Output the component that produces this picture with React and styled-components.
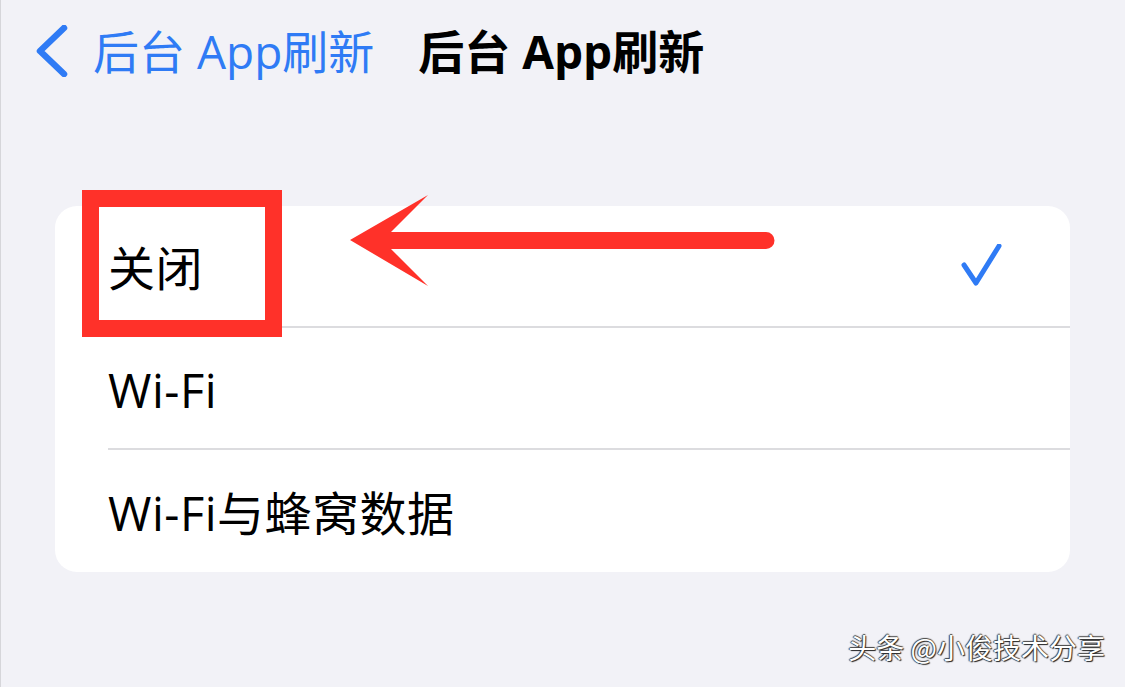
import React from "react";
import styled, { createGlobalStyle } from "styled-components";

const Global = createGlobalStyle`
  html, body { margin: 0; padding: 0; background: #f2f2f7; }
  body { font-family: "Open Sans", "Noto Sans CJK SC", sans-serif; }
`;

const Page = styled.div`
  width: 1125px;
  height: 687px;
  box-sizing: border-box;
  background: #f2f2f7;
  border-left: 1px solid #d6d6da;
  padding: 26px 0 0 0;
  display: flex;
  flex-direction: column;
  overflow: hidden;
`;

const NavBar = styled.div`
  display: flex;
  align-items: center;
  height: 50px;
  padding-left: 35px;
`;

const BackButton = styled.div`
  display: flex;
  align-items: center;
  gap: 23px;
  color: #2f7bf5;
  font-family: "Open Sans", "Noto Sans CJK SC", sans-serif;
  font-size: 46px;
  line-height: 1;
`;

const Title = styled.div`
  margin-left: 44px;
  color: #000;
  font-family: "Open Sans", "Noto Sans CJK SC", sans-serif;
  font-weight: 700;
  font-size: 46px;
  line-height: 1;
`;

const Card = styled.div`
  position: relative;
  margin: 130px 0 0 54px;
  width: 1015px;
  background: #fff;
  border-radius: 22px;
  display: flex;
  flex-direction: column;
`;

const Row = styled.div`
  height: 122px;
  padding-left: 55px;
  display: flex;
`;

const RowInner = styled.div`
  flex: 1;
  display: flex;
  align-items: center;
  justify-content: space-between;
  padding-right: 66px;
  border-bottom: ${(p) => (p.$last ? "none" : "2px solid #dcdcdf")};
  margin-left: -2px;
`;

const Label = styled.span`
  font-family: "Open Sans", "Noto Sans CJK SC", sans-serif;
  font-size: 47px;
  letter-spacing: 0.5px;
  color: #000;
  line-height: 1;
  padding-top: 4px;
`;

const Highlight = styled.div`
  position: absolute;
  left: 27px;
  top: -16px;
  width: 200px;
  height: 147px;
  box-sizing: border-box;
  border: 17px solid #ff3129;
  pointer-events: none;
`;

const Arrow = styled.svg`
  position: absolute;
  left: 290px;
  top: -16px;
  pointer-events: none;
`;

const Footer = styled.div`
  margin-top: auto;
  padding: 0 20px 20px 0;
  text-align: right;
  font-family: "Noto Sans CJK SC", sans-serif;
  font-size: 28px;
  color: #fff;
  text-shadow: 1px 1px 1px #222, -1px 0 1px #444, 0 -1px 1px #444;
`;

const Chevron = () => (
  <svg width="34" height="52" viewBox="0 0 34 52">
    <path d="M28 3 L4 26 L28 49" fill="none" stroke="#2f7bf5" strokeWidth="6.5" strokeLinecap="round" strokeLinejoin="round" />
  </svg>
);

const Check = () => (
  <svg width="44" height="44" viewBox="0 0 44 44">
    <path d="M4 21 L16 39 L39 2" fill="none" stroke="#2f7bf5" strokeWidth="5" strokeLinecap="round" strokeLinejoin="round" />
  </svg>
);

const options = [
  { label: "关闭", checked: true },
  { label: "Wi-Fi" },
  { label: "Wi-Fi与蜂窝数据" },
];

export default function App() {
  return (
    <>
      <Global />
      <Page>
        <NavBar>
          <BackButton>
            <Chevron />
            <span>后台 App刷新</span>
          </BackButton>
          <Title>后台 App刷新</Title>
        </NavBar>
        <Card>
          {options.map((o, i) => (
            <Row key={o.label}>
              <RowInner $last={i === options.length - 1}>
                <Label>{o.label}</Label>
                {o.checked && <Check />}
              </RowInner>
            </Row>
          ))}
          <Highlight />
          <Arrow width="440" height="100" viewBox="0 0 440 100">
            <path
              d="M5 50 L83 5 L46 42 L421 42 A8.5 8.5 0 0 1 421 59 L46 59 L83 96 Z"
              fill="#ff3129"
            />
          </Arrow>
        </Card>
        <Footer>头条 @小俊技术分享</Footer>
      </Page>
    </>
  );
}
